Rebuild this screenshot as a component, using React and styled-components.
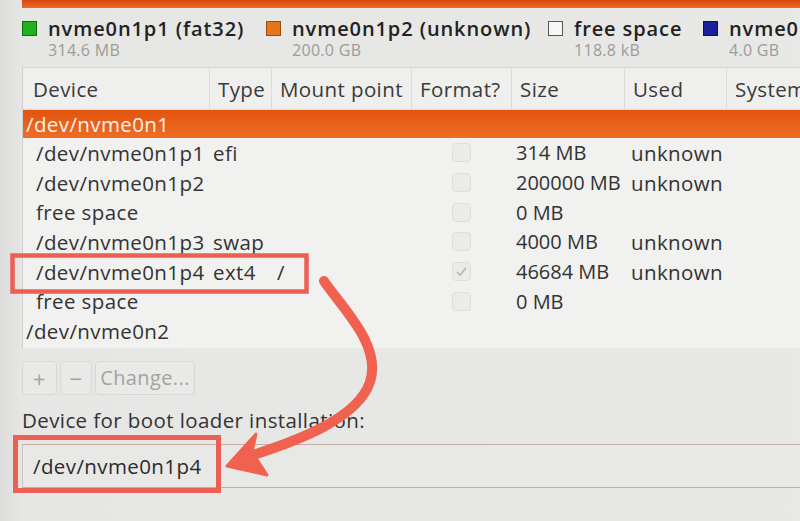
import React from "react";
import styled, { createGlobalStyle } from "styled-components";

const Global = createGlobalStyle`
  html, body { margin: 0; padding: 0; background: #e4e4e2; }
  body { font-family: "Open Sans", "DejaVu Sans", sans-serif; overflow: hidden; }
`;

const Page = styled.div`
  position: relative;
  width: 800px;
  height: 521px;
  overflow: hidden;
  background: linear-gradient(90deg, #dcdcda 0px, #e6e6e4 22px, #e8e8e6 100%);
`;

const TopBar = styled.div`
  height: 8px;
  margin-left: 22px;
  background: linear-gradient(180deg, #d9480f, #ec6a26);
`;

const Legend = styled.div`
  display: flex;
  padding: 9px 0 0 22px;
  box-sizing: border-box;
  height: 59px;
  white-space: nowrap;
  overflow: hidden;
`;

const LegendItem = styled.div`
  display: flex;
  align-items: flex-start;
  gap: 11px;
  width: ${(p) => p.$w}px;
  flex-shrink: 0;
`;

const Swatch = styled.span`
  width: 13px;
  height: 13px;
  margin-top: 4px;
  flex-shrink: 0;
  background: ${(p) => p.$color};
  border: 1px solid ${(p) => p.$border};
`;

const LegendText = styled.div`
  display: flex;
  flex-direction: column;
`;

const LegendName = styled.span`
  font-size: 20px;
  font-weight: 600;
  line-height: 24px;
  color: #222;
  letter-spacing: 0.9px;
`;

const LegendSize = styled.span`
  font-size: 16px;
  line-height: 18px;
  color: #9c9c9a;
  letter-spacing: 0.3px;
`;

const Table = styled.div`
  margin-left: 22px;
  background: #f1f1ef;
  border-left: 1px solid #cfcfcd;
  border-top: 1px solid #d6d6d4;
`;

const cols = "186px 62px 140px 100px 113px 102px 1fr";

const HeaderRow = styled.div`
  display: grid;
  grid-template-columns: ${cols};
  height: 41px;
  background: #efefed;
  border-bottom: 1px solid #dcdcda;
`;

const HeaderCell = styled.div`
  display: flex;
  align-items: center;
  padding-left: ${(p) => p.$pad ?? 8}px;
  font-size: 20.5px;
  letter-spacing: 0.4px;
  color: #3a3a3a;
  white-space: nowrap;
  overflow: hidden;
  border-left: ${(p) => (p.$first ? "none" : "1px solid #dcdcda")};
`;

const Row = styled.div`
  display: grid;
  grid-template-columns: ${cols};
  height: ${(p) => (p.$selected ? 28 : 29.7)}px;
  align-items: center;
  font-size: 20.5px;
  letter-spacing: 0.4px;
  color: ${(p) => (p.$selected ? "#fff3ea" : "#333")};
  background: ${(p) =>
    p.$selected ? "linear-gradient(180deg, #e2540f, #ef6d25)" : "transparent"};
  white-space: nowrap;
`;

const Cell = styled.div`
  padding-left: ${(p) => p.$pad ?? 4}px;
  overflow: visible;
`;

const SizeCell = styled(Cell)`
  font-size: 20px;
  letter-spacing: 0;
`;

const CheckCell = styled.div`
  display: flex;
  justify-content: center;
`;

const Check = styled.span`
  width: 17px;
  height: 17px;
  border-radius: 4px;
  border: 1px solid #dededc;
  background: #ebebe9;
  display: flex;
  align-items: center;
  justify-content: center;
`;

const Spacer = styled.div`
  height: 2px;
`;

const Buttons = styled.div`
  display: flex;
  gap: 3px;
  margin: 13px 0 0 22px;
`;

const Btn = styled.div`
  height: 34px;
  width: ${(p) => p.$w}px;
  box-sizing: border-box;
  border: 1px solid #d8d8d6;
  border-radius: 4px;
  background: #e9e9e7;
  color: #a3a3a1;
  font-size: ${(p) => p.$fs ?? 20}px;
  letter-spacing: 0.4px;
  display: flex;
  align-items: center;
  justify-content: center;
`;

const Label = styled.div`
  margin: 11px 0 0 22px;
  font-size: 20.5px;
  letter-spacing: 0.4px;
  color: #333;
  line-height: 28px;
`;

const Combo = styled.div`
  margin: 10px 0 0 22px;
  height: 42px;
  border-top: 1px solid #c9aaa6;
  border-bottom: 1px solid #c9aaa6;
  border-left: 1px solid #d0c4c2;
  background: #e8e8e6;
  display: flex;
  align-items: center;
  padding-left: 10px;
  font-size: 20.5px;
  letter-spacing: 0.4px;
  color: #2b2b2b;
`;

const Overlay = styled.svg`
  position: absolute;
  left: 0;
  top: 0;
  pointer-events: none;
`;

const legend = [
  { name: "nvme0n1p1 (fat32)", size: "314.6 MB", color: "#20b020", border: "#107010", w: 244 },
  { name: "nvme0n1p2 (unknown)", size: "200.0 GB", color: "#e4761c", border: "#a04a10", w: 282 },
  { name: "free space", size: "118.8 kB", color: "#f6f6f4", border: "#555", w: 155 },
  { name: "nvme0n1p3 (linux-swap)", size: "4.0 GB", color: "#1a1f9c", border: "#0c0f60", w: 300 },
];

const rows = [
  { dev: "/dev/nvme0n1", selected: true, top: true },
  { dev: "/dev/nvme0n1p1", type: "efi", size: "314 MB", used: "unknown", check: true },
  { dev: "/dev/nvme0n1p2", size: "200000 MB", used: "unknown", check: true },
  { dev: "free space", size: "0 MB", check: true },
  { dev: "/dev/nvme0n1p3", type: "swap", size: "4000 MB", used: "unknown", check: true },
  { dev: "/dev/nvme0n1p4", type: "ext4", mount: "/", size: "46684 MB", used: "unknown", check: true, checked: true },
  { dev: "free space", size: "0 MB", check: true },
  { dev: "/dev/nvme0n2", top: true },
];

export default function App() {
  return (
    <Page>
      <Global />
      <TopBar />
      <Legend>
        {legend.map((l) => (
          <LegendItem key={l.name} $w={l.w}>
            <Swatch $color={l.color} $border={l.border} />
            <LegendText>
              <LegendName>{l.name}</LegendName>
              <LegendSize>{l.size}</LegendSize>
            </LegendText>
          </LegendItem>
        ))}
      </Legend>
      <Table>
        <HeaderRow>
          <HeaderCell $first $pad={10}>Device</HeaderCell>
          <HeaderCell>Type</HeaderCell>
          <HeaderCell>Mount point</HeaderCell>
          <HeaderCell>Format?</HeaderCell>
          <HeaderCell>Size</HeaderCell>
          <HeaderCell>Used</HeaderCell>
          <HeaderCell>System</HeaderCell>
        </HeaderRow>
        {rows.map((r, i) => (
          <Row key={i} $selected={r.selected}>
            <Cell $pad={r.top ? 3 : 13}>{r.dev}</Cell>
            <Cell $pad={4}>{r.type}</Cell>
            <Cell $pad={6}>{r.mount}</Cell>
            <CheckCell>
              {r.check && (
                <Check>
                  {r.checked && (
                    <svg width="13" height="13" viewBox="0 0 13 13">
                      <path d="M2 7 L5 10 L11 3" fill="none" stroke="#b4b4b2" strokeWidth="1.6" />
                    </svg>
                  )}
                </Check>
              )}
            </CheckCell>
            <SizeCell $pad={5}>{r.size}</SizeCell>
            <Cell $pad={7}>{r.used}</Cell>
            <Cell />
          </Row>
        ))}
        <Spacer />
      </Table>
      <Buttons>
        <Btn $w={35} $fs={22}>+</Btn>
        <Btn $w={32} $fs={22}>−</Btn>
        <Btn $w={100}>Change...</Btn>
      </Buttons>
      <Label>Device for boot loader installation:</Label>
      <Combo>/dev/nvme0n1p4</Combo>
      <Overlay width="800" height="521" viewBox="0 0 800 521">
        <rect x="12.5" y="255.5" width="294" height="36" fill="none" stroke="#ec5f52" strokeWidth="4.5" />
        <rect x="15.5" y="437.5" width="203" height="53" fill="none" stroke="#ec5f52" strokeWidth="5" />
        <path
          d="M 324 281 C 342 308, 382 345, 370 382 C 358 418, 300 440, 250 456"
          fill="none"
          stroke="#f0614f"
          strokeWidth="10"
          strokeLinecap="round"
        />
        <polygon points="227,466 256,434 252,452 267,475" fill="#f0614f" stroke="#f0614f" strokeWidth="3" strokeLinejoin="round" />
      </Overlay>
    </Page>
  );
}
